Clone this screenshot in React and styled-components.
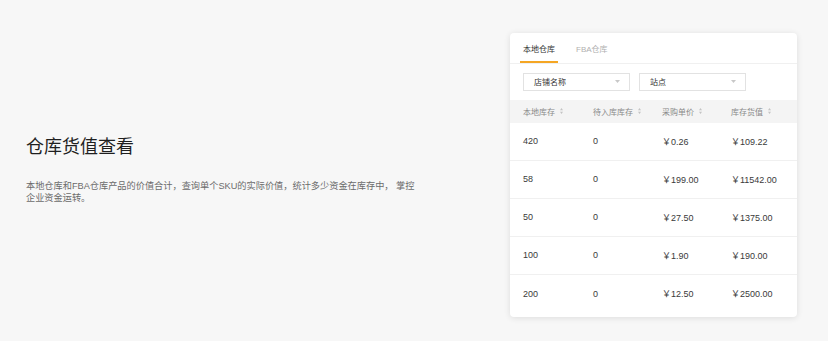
import styled, { createGlobalStyle } from 'styled-components';

const GlobalStyle = createGlobalStyle`
    body {
        margin: 0;
        background: #f7f7f7;
        font-family: "Liberation Sans", "Noto Sans CJK SC", sans-serif;
    }
`;

const Page = styled.div`
    display: flex;
    align-items: center;
    justify-content: space-between;
    height: 341px;
    padding: 0 31px 0 26px;
    box-sizing: border-box;
`;

const Intro = styled.div`
    width: 396px;
    margin-top: -3px;
`;

const Title = styled.h2`
    margin: 0 0 21px;
    font-size: 18px;
    font-weight: 400;
    line-height: 24px;
    color: #1f1f1f;
`;

const Desc = styled.p`
    margin: 0;
    font-size: 9.2px;
    line-height: 12px;
    color: #6b6b6b;
`;

const Card = styled.div`
    width: 287px;
    margin-top: 8px;
    background: #fff;
    border-radius: 4px;
    box-shadow: 0 1px 6px rgba(0, 0, 0, 0.11);
    padding-bottom: 4px;
`;

const Tabs = styled.div`
    display: flex;
    padding: 0 10px;
    border-bottom: 1px solid #f0f0f0;
`;

const Tab = styled.div`
    padding: 11px 3px 5px;
    margin-right: 15px;
    font-size: 8px;
    line-height: 12px;
    color: ${props => (props.$active ? '#333' : '#b0b0b0')};
    border-bottom: 2px solid ${props => (props.$active ? '#f5a623' : 'transparent')};
`;

const Filters = styled.div`
    display: flex;
    gap: 9px;
    padding: 9px 13px 9px;
`;

const Select = styled.div`
    display: flex;
    align-items: center;
    justify-content: space-between;
    width: 107px;
    height: 18px;
    box-sizing: border-box;
    padding: 0 9px 0 10px;
    border: 1px solid #e2e2e2;
    font-size: 8px;
    color: #333;
`;

const Caret = () => (
    <svg width="5" height="3" viewBox="0 0 5 3">
        <path d="M0 0h5L2.5 3z" fill="#c8c8c8" />
    </svg>
);

const SortIcon = () => (
    <svg width="3" height="6" viewBox="0 0 3 6" style={{ marginLeft: 5 }}>
        <path d="M1.5 0L3 2.3H0z M1.5 6L0 3.7h3z" fill="#c4c4c4" />
    </svg>
);

const Row = styled.div`
    display: grid;
    grid-template-columns: 70px 69px 69px 1fr;
    align-items: center;
    height: ${props => (props.$head ? '23px' : '38px')};
    background: ${props => (props.$head ? '#f4f4f4' : '#fff')};
    border-bottom: ${props => (props.$head || props.$last ? 'none' : '1px solid #f0f0f0')};
    box-sizing: border-box;
`;

const Cell = styled.div`
    display: flex;
    align-items: center;
    padding-left: 13px;
    font-size: ${props => (props.$head ? '8px' : '9px')};
    color: ${props => (props.$head ? '#8a8a8a' : '#3a3a3a')};
`;

const headers = ['本地库存', '待入库库存', '采购单价', '库存货值'];

const rows = [
    ['420', '0', '￥0.26', '￥109.22'],
    ['58', '0', '￥199.00', '￥11542.00'],
    ['50', '0', '￥27.50', '￥1375.00'],
    ['100', '0', '￥1.90', '￥190.00'],
    ['200', '0', '￥12.50', '￥2500.00'],
];

export default function App() {
    return (
        <>
            <GlobalStyle />
            <Page>
                <Intro>
                    <Title>仓库货值查看</Title>
                    <Desc>
                        本地仓库和FBA仓库产品的价值合计，查询单个SKU的实际价值，统计多少资金在库存中， 掌控企业资金运转。
                    </Desc>
                </Intro>
                <Card>
                    <Tabs>
                        <Tab $active>本地仓库</Tab>
                        <Tab>FBA仓库</Tab>
                    </Tabs>
                    <Filters>
                        <Select>店铺名称<Caret /></Select>
                        <Select>站点<Caret /></Select>
                    </Filters>
                    <Row $head>
                        {headers.map(h => (
                            <Cell $head key={h}>{h}<SortIcon /></Cell>
                        ))}
                    </Row>
                    {rows.map((r, i) => (
                        <Row key={i} $last={i === rows.length - 1}>
                            {r.map((c, j) => (
                                <Cell key={j}>{c}</Cell>
                            ))}
                        </Row>
                    ))}
                </Card>
            </Page>
        </>
    );
}
